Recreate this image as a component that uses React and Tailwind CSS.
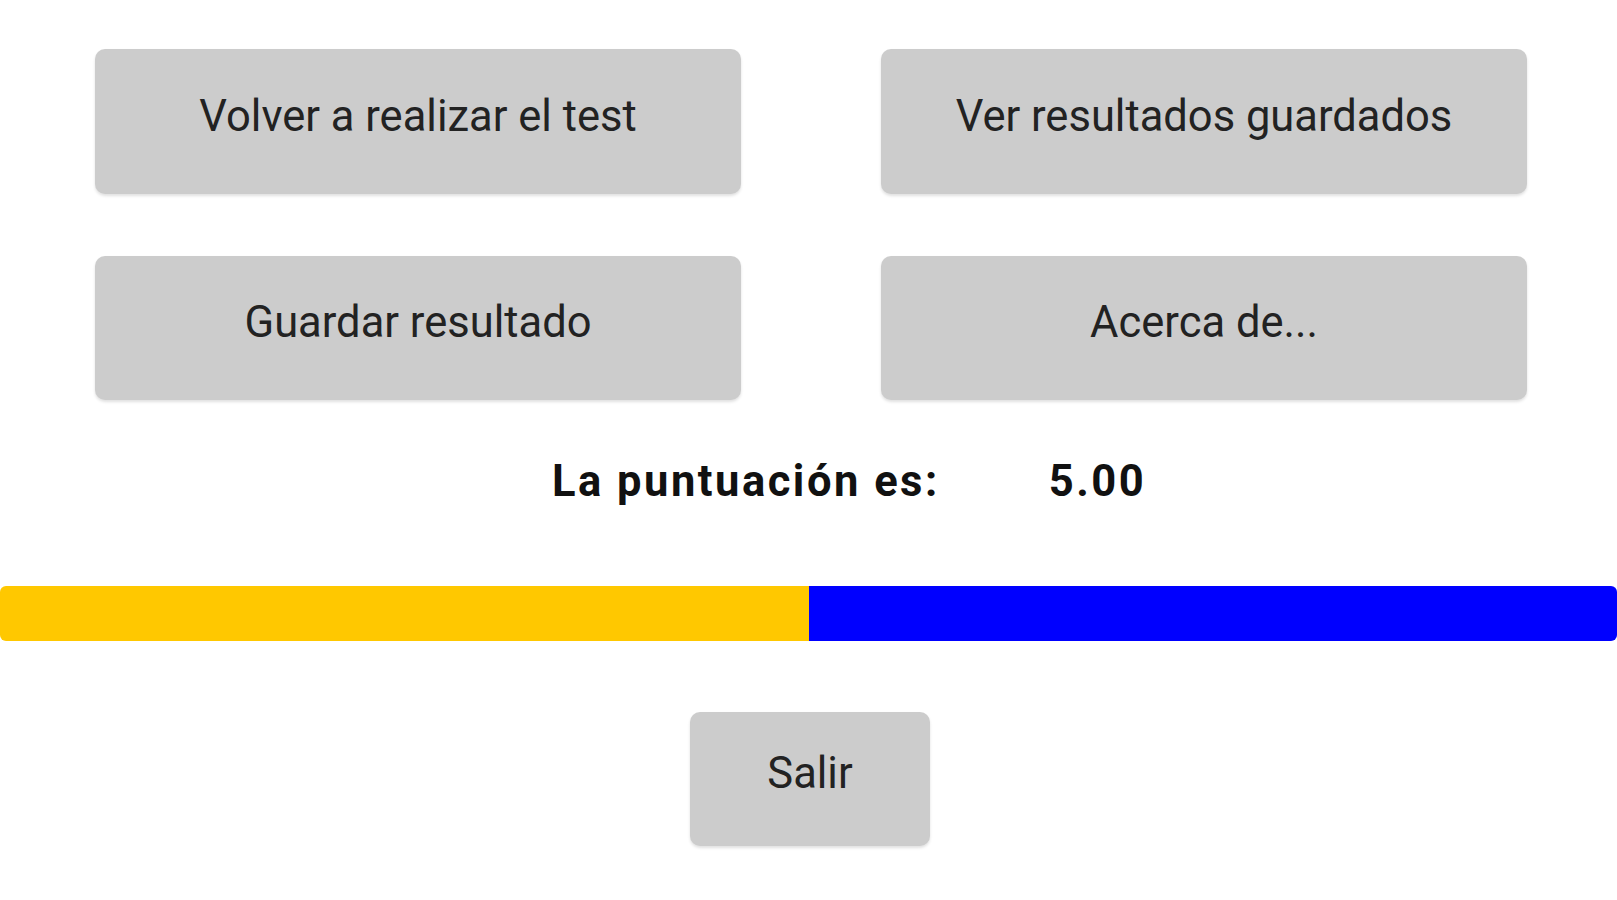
export default function App() {
  const score = 5;
  const pct = (score / 10) * 100;
  const btn =
    "flex items-center justify-center rounded-[10px] bg-[#cccccc] pb-[10px] text-[43.5px] leading-none text-[#222222] shadow-[0_2px_3px_rgba(0,0,0,0.12)]";

  return (
    <div className="h-[900px] w-[1617px] bg-white font-['Roboto',sans-serif]">
      <div className="grid grid-cols-2 gap-x-[140px] gap-y-[62px] pl-[95px] pr-[90px] pt-[49px]">
        <button type="button" className={`${btn} h-[145px]`}>Volver a realizar el test</button>
        <button type="button" className={`${btn} h-[145px]`}>Ver resultados guardados</button>
        <button type="button" className={`${btn} h-[144px]`}>Guardar resultado</button>
        <button type="button" className={`${btn} h-[144px]`}>Acerca de...</button>
      </div>

      <div className="mt-[60px] flex items-center gap-[109px] pl-[552px] text-[43.5px] font-bold leading-none tracking-[2.5px] text-[#111111]">
        <span>La puntuación es:</span>
        <span>5.00</span>
      </div>

      <div className="mt-[82px] flex h-[55px] w-full overflow-hidden rounded-[6px]">
        <div className="h-full bg-[#ffc800]" style={{ width: `${pct}%` }} />
        <div className="h-full flex-1 bg-[#0000ff]" />
      </div>

      <div className="mt-[71px] flex justify-center">
        <button type="button" className={`${btn} ml-[3px] h-[134px] w-[240px]`}>Salir</button>
      </div>
    </div>
  );
}
